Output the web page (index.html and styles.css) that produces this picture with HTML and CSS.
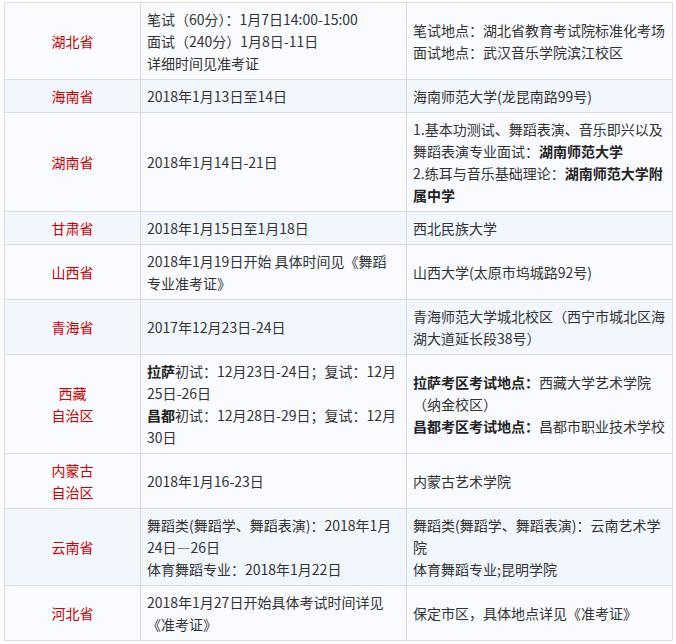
FILE: index.html
```html
<!DOCTYPE html>
<html lang="zh-CN">
<head>
<meta charset="utf-8">
<title>舞蹈专业考试时间地点</title>
<link rel="stylesheet" href="styles.css">
</head>
<body>
<div class="page">
<table class="exam">
  <colgroup>
    <col class="c-prov">
    <col class="c-time">
    <col class="c-place">
  </colgroup>
  <tbody>
    <tr class="light">
      <td class="prov">湖北省</td>
      <td>笔试（60分）：1月7日14:00-15:00<br>面试（240分）1月8日-11日<br>详细时间见准考证</td>
      <td>笔试地点：湖北省教育考试院标准化考场<br>面试地点：武汉音乐学院滨江校区</td>
    </tr>
    <tr class="blue">
      <td class="prov">海南省</td>
      <td>2018年1月13日至14日</td>
      <td>海南师范大学(龙昆南路99号)</td>
    </tr>
    <tr class="light">
      <td class="prov">湖南省</td>
      <td>2018年1月14日-21日</td>
      <td>1.基本功测试、舞蹈表演、音乐即兴以及<br>舞蹈表演专业面试：<strong>湖南师范大学</strong><br>2.练耳与音乐基础理论：<strong>湖南师范大学附<br>属中学</strong></td>
    </tr>
    <tr class="blue">
      <td class="prov">甘肃省</td>
      <td>2018年1月15日至1月18日</td>
      <td>西北民族大学</td>
    </tr>
    <tr class="light">
      <td class="prov">山西省</td>
      <td>2018年1月19日开始 具体时间见《舞蹈<br>专业准考证》</td>
      <td>山西大学(太原市坞城路92号)</td>
    </tr>
    <tr class="blue">
      <td class="prov">青海省</td>
      <td>2017年12月23日-24日</td>
      <td>青海师范大学城北校区（西宁市城北区海<br>湖大道延长段38号）</td>
    </tr>
    <tr class="light">
      <td class="prov">西藏<br>自治区</td>
      <td><strong>拉萨</strong>初试：12月23日-24日；复试：12月<br>25日-26日<br><strong>昌都</strong>初试：12月28日-29日；复试：12月<br>30日</td>
      <td><strong>拉萨考区考试地点：</strong>西藏大学艺术学院<br>（纳金校区）<br><strong>昌都考区考试地点：</strong>昌都市职业技术学校</td>
    </tr>
    <tr class="light">
      <td class="prov">内蒙古<br>自治区</td>
      <td>2018年1月16-23日</td>
      <td>内蒙古艺术学院</td>
    </tr>
    <tr class="blue">
      <td class="prov">云南省</td>
      <td>舞蹈类(舞蹈学、舞蹈表演)：2018年1月<br>24日—26日<br>体育舞蹈专业：2018年1月22日</td>
      <td>舞蹈类(舞蹈学、舞蹈表演)：云南艺术学<br>院<br>体育舞蹈专业;昆明学院</td>
    </tr>
    <tr class="light">
      <td class="prov">河北省</td>
      <td>2018年1月27日开始具体考试时间详见<br>《准考证》</td>
      <td>保定市区，具体地点详见《准考证》</td>
    </tr>
  </tbody>
</table>
</div>
</body>
</html>
```

FILE: styles.css
```css
html, body {
  margin: 0;
  padding: 0;
  background: #ffffff;
}

.page {
  padding: 2px 0 0 4px;
}

.exam {
  border-collapse: collapse;
  table-layout: fixed;
  width: 668px;
  font-family: "Noto Sans CJK SC", "Microsoft YaHei", sans-serif;
  font-size: 14px;
  line-height: 22px;
  color: #333333;
}

.c-prov { width: 136px; }
.c-time { width: 266px; }
.c-place { width: 266px; }

.exam td {
  border: 1px solid #dcdcdc;
  padding: 5px 5px 5px 6px;
  vertical-align: middle;
  white-space: nowrap;
  overflow: hidden;
}

.exam td.prov {
  text-align: center;
  color: #cc0000;
  padding-left: 5px;
}

.exam strong {
  font-weight: bold;
  color: #222222;
}

.light { background: #f9fbff; }
.blue { background: #f2f6fd; }
```
